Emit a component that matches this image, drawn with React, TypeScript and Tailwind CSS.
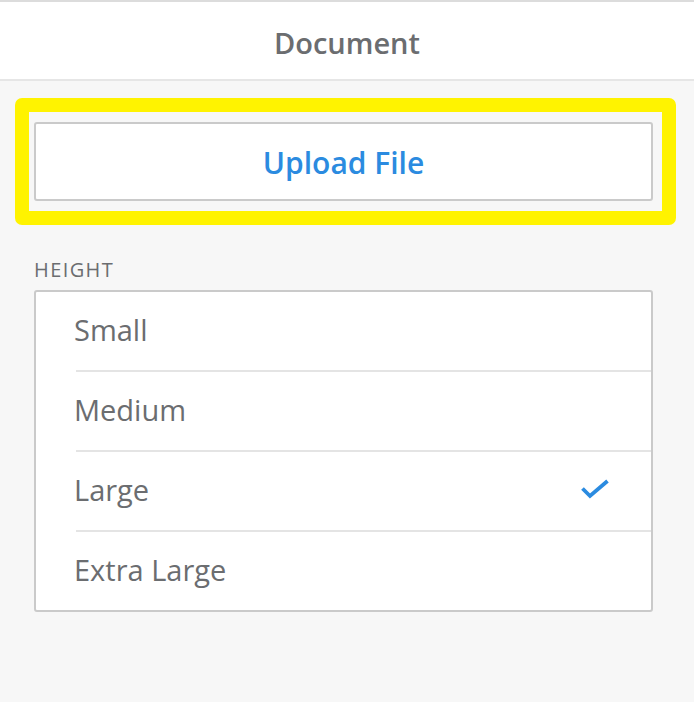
const sizes = ["Small", "Medium", "Large", "Extra Large"];

const App = () => {
  const selected = "Large";
  return (
    <div
      className="min-h-[702px] bg-[#f7f7f7] text-[#6b6d70]"
      style={{ fontFamily: '"Open Sans", "Liberation Sans", sans-serif' }}
    >
      <div className="h-[81px] bg-white border-t-2 border-b-2 border-t-[#dcdcdc] border-b-[#e6e6e6] flex items-center justify-center pt-[3px]">
        <h1 className="text-[29px] font-semibold leading-none">Document</h1>
      </div>

      <div className="mt-[17px] ml-[15px] mr-[18px] border-[14px] border-[#fff300] rounded-[7px] pl-[5px] pr-[9px] pt-[10px] pb-[10px]">
        <button className="w-full h-[79px] pt-[2px] bg-white border-2 border-[#cacaca] rounded-[3px] text-[30px] font-semibold text-[#2b8be0]">
          Upload File
        </button>
      </div>

      <div className="pl-[34px] pr-[41px] pt-[33px]">
        <p className="text-[20px] leading-[24px] tracking-[1.4px] uppercase">Height</p>
        <ul className="mt-[8px] bg-white border-2 border-[#cacaca] rounded-[3px]">
          {sizes.map((size, i) => (
            <li key={size} className="pl-[40px]">
              <div
                className={`h-[78px] flex items-center justify-between pr-[42px] pb-[2px] ${
                  i < sizes.length - 1 ? "border-b-2 border-[#e4e4e4] h-[80px]" : ""
                }`}
              >
                <span className="text-[29px] -ml-[2px]">{size}</span>
                {size === selected && (
                  <svg width="28" height="20" viewBox="0 0 28 20" fill="none" className="-mt-[3px]">
                    <path
                      d="M1.5 9.5 L9 17 L26.5 2"
                      stroke="#2b8be0"
                      strokeWidth="3.8"
                    />
                  </svg>
                )}
              </div>
            </li>
          ))}
        </ul>
      </div>
    </div>
  );
};

export default App;
